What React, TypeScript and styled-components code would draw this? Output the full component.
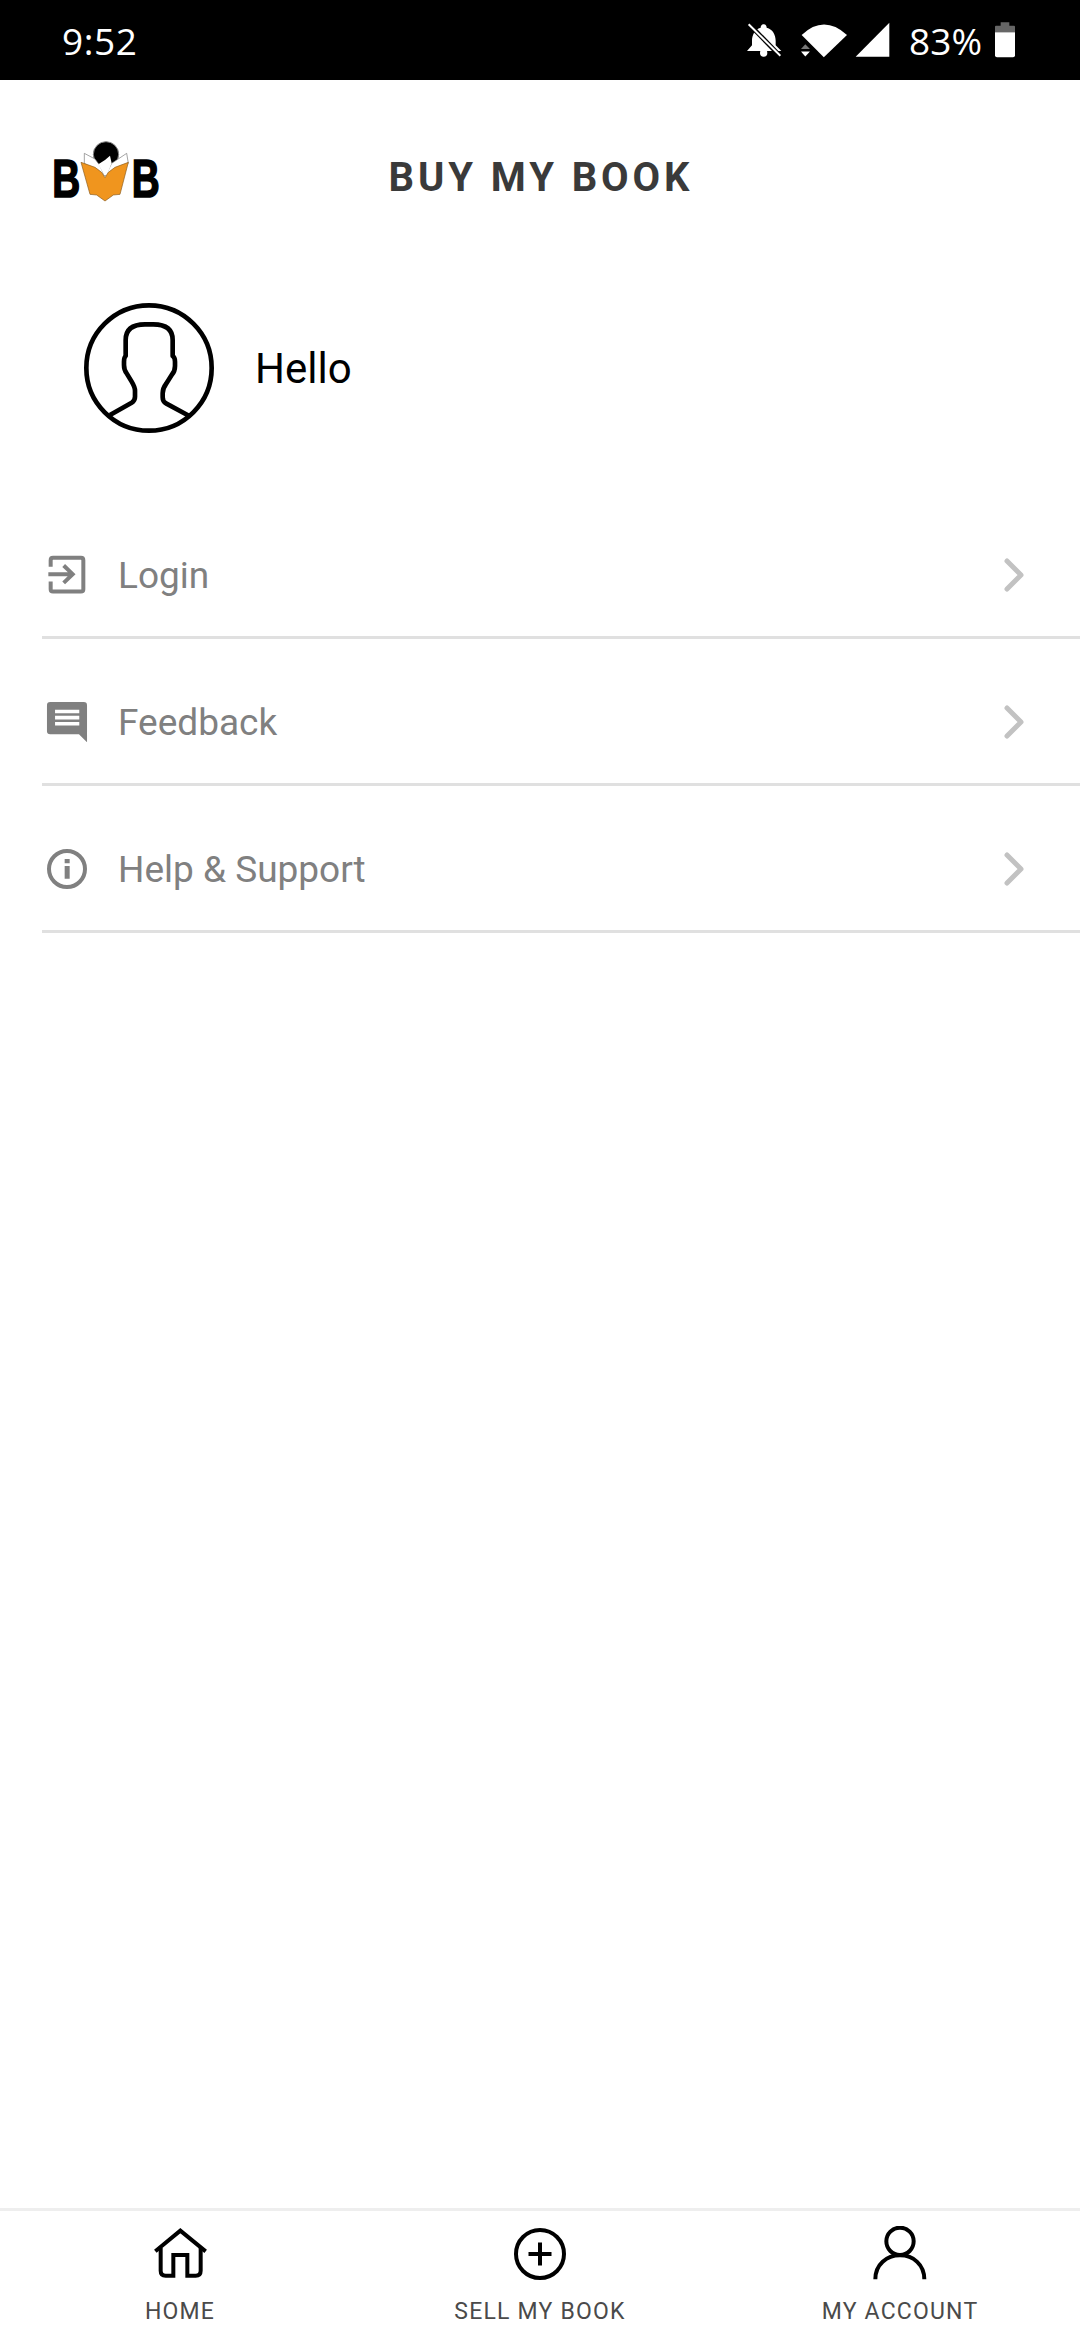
import React from "react";
import styled, { createGlobalStyle } from "styled-components";

const Global = createGlobalStyle`
  html, body { margin: 0; padding: 0; background: #fff; }
  #root { width: 1080px; height: 2340px; }
  * { box-sizing: border-box; }
`;

const Page = styled.div`
  width: 1080px;
  height: 2340px;
  display: flex;
  flex-direction: column;
  background: #fff;
  font-family: Roboto, "Liberation Sans", sans-serif;
  overflow: hidden;
`;

const StatusBar = styled.div`
  height: 80px;
  flex: none;
  background: #000;
  color: #fff;
  display: flex;
  align-items: center;
  padding: 0 65px 0 62px;
  font-family: "Open Sans", sans-serif;
  font-weight: 400;
  font-size: 37px;
`;
const Clock = styled.span`
  letter-spacing: 0.6px;
  margin-right: auto;
`;
const StatusIcon = styled.svg<{ $gap: number }>`
  display: block;
  flex: none;
  margin-left: ${(p) => p.$gap}px;
`;
const Battery = styled.span`
  margin-left: 19px;
  margin-right: 13px;
`;

const Header = styled.header`
  height: 194px;
  flex: none;
  display: grid;
  grid-template-columns: 1fr auto 1fr;
  align-items: center;
  padding: 0 43px 0 45px;
`;
const Title = styled.h1`
  margin: 0;
  font-size: 40px;
  font-weight: 700;
  letter-spacing: 3.9px;
  color: #3a3a3a;
`;
const Logo = styled.svg`
  display: block;
  margin-bottom: 9px;
`;

const Profile = styled.section`
  display: flex;
  align-items: center;
  gap: 41px;
  padding: 29px 0 0 84px;
  flex: none;
`;
const Avatar = styled.svg`
  display: block;
  flex: none;
`;
const Greeting = styled.span`
  font-size: 42px;
  color: #000;
`;

const Menu = styled.nav`
  flex: 1;
  margin-top: 59px;
  display: flex;
  flex-direction: column;
`;
const Row = styled.div`
  height: 126px;
  margin: 21px 0 0 42px;
  padding-right: 50px;
  border-bottom: 3px solid #e0e0e0;
  display: flex;
  align-items: center;
`;
const RowIcon = styled.span`
  width: 50px;
  height: 50px;
  flex: none;
  display: flex;
  align-items: center;
  justify-content: center;
  margin-right: 26px;
`;
const RowLabel = styled.span`
  flex: 1;
  padding-top: 2px;
  font-size: 37px;
  color: #808080;
`;
const Chevron = styled.svg`
  display: block;
  flex: none;
`;

const TabBar = styled.footer`
  height: 132px;
  flex: none;
  border-top: 3px solid #eeeeee;
  display: grid;
  grid-template-columns: repeat(3, 1fr);
`;
const Tab = styled.div`
  display: flex;
  flex-direction: column;
  align-items: center;
  padding-top: 15px;
`;
const TabIcon = styled.svg`
  display: block;
  flex: none;
`;
const TabLabel = styled.span`
  margin-top: 16px;
  font-size: 23px;
  line-height: 28px;
  letter-spacing: 1.2px;
  color: #4a4a4a;
`;

const chevron = (
  <Chevron width="30" height="44" viewBox="0 0 30 44" fill="none">
    <path d="M7 8 L21 22 L7 36" stroke="#c2c2c2" strokeWidth="5" strokeLinecap="round" strokeLinejoin="round" />
  </Chevron>
);

const items = [
  {
    label: "Login",
    icon: (
      <svg width="40" height="41" viewBox="80 70 120 122" fill="none" stroke="#808080" strokeWidth="12">
        <path d="M91 108 V88 Q91 81 98 81 H182 Q189 81 189 88 V175 Q189 182 182 182 H98 Q91 182 91 175 V152" />
        <path d="M84 130 H155 M130 104 L157 130 L130 156" />
      </svg>
    ),
  },
  {
    label: "Feedback",
    icon: (
      <svg width="42" height="42" viewBox="75 507 130 130">
        <path fill="#808080" d="M88 510 H192 Q202 510 202 520 V635 L177 610 H88 Q78 610 78 600 V520 Q78 510 88 510 Z" />
        <path fill="#fff" d="M103 534 H178 V545 H103 Z M103 553 H178 V564 H103 Z M103 572 H178 V583 H103 Z" />
      </svg>
    ),
  },
  {
    label: "Help & Support",
    icon: (
      <svg width="42" height="42" viewBox="77 953 126 126">
        <circle cx="140" cy="1016" r="54" fill="none" stroke="#808080" strokeWidth="12" />
        <path fill="#808080" d="M133 986 H148 V999 H133 Z M133 1007 H148 V1045 H133 Z" />
      </svg>
    ),
  },
];

export default function App() {
  return (
    <Page>
      <Global />
      <StatusBar>
        <Clock>9:52</Clock>
        <StatusIcon $gap={0} width="35" height="34" viewBox="140 68 105 102">
          <path fill="#fff" d="M190 72 C197 72 199 78 199 82 C218 87 226 104 226 122 L226 135 L243 152 L140 152 L155 135 L155 122 C155 104 163 87 181 82 C181 78 183 72 190 72 Z" />
          <circle cx="190" cy="158" r="11" fill="#fff" />
          <path d="M143 68 L240 168" stroke="#000" strokeWidth="14" />
          <path d="M145 72 L240 166" stroke="#fff" strokeWidth="6" />
        </StatusIcon>
        <StatusIcon $gap={18} width="48" height="36" viewBox="300 66 145 108">
          <path fill="#fff" d="M305 105 Q372 42 442 105 L372 172 Z" />
          <path fill="#777" d="M303 147 L316 133 L330 147 Z" />
          <path fill="#fff" d="M303 155 H330 L316 170 Z" />
        </StatusIcon>
        <StatusIcon $gap={7} width="35" height="36" viewBox="465 66 105 108">
          <path fill="#fff" d="M467 170 L568 68 V170 Z" />
        </StatusIcon>
        <Battery>83%</Battery>
        <StatusIcon $gap={0} width="20" height="36" viewBox="885 65 60 108">
          <path fill="#666" d="M902 66 H928 V76 H942 Q945 76 945 79 V96 H885 V79 Q885 76 888 76 H902 Z" />
          <path fill="#fff" d="M885 96 H945 V165 Q945 171 939 171 H891 Q885 171 885 165 Z" />
        </StatusIcon>
      </StatusBar>

      <Header>
        <Logo width="125" height="75" viewBox="0 0 375 225">
          <text x="22" y="187" fontFamily="Liberation Sans, sans-serif" fontWeight="700" fontSize="162" fill="#000" stroke="#000" strokeWidth="5" textLength="84" lengthAdjust="spacingAndGlyphs">B</text>
          <text x="260" y="187" fontFamily="Liberation Sans, sans-serif" fontWeight="700" fontSize="162" fill="#000" stroke="#000" strokeWidth="5" textLength="84" lengthAdjust="spacingAndGlyphs">B</text>
          <circle cx="183" cy="58" r="38" fill="#000" stroke="#888" strokeWidth="3" />
          <path fill="#fff" stroke="#777" strokeWidth="2" d="M118 55 L150 72 L165 92 L178 122 L182 122 L200 85 L245 55 L250 85 L215 110 L180 135 L140 100 L118 85 Z" />
          <path fill="#fff" d="M160 88 L180 75 L195 62 L200 85 L185 120 L178 120 Z" />
          <path fill="#f0951e" stroke="#8a5a1c" strokeWidth="2" d="M108 82 L150 97 L170 112 L180 128 L190 112 L210 97 L250 82 L225 178 L205 180 L180 198 L155 180 L135 178 Z" />
        </Logo>
        <Title>BUY MY BOOK</Title>
      </Header>

      <Profile>
        <Avatar width="130" height="130" viewBox="72 69 390 390" fill="none" stroke="#000" strokeWidth="14">
          <circle cx="267" cy="264" r="188" />
          <path strokeLinejoin="round" d="M150 405 L215 368 Q225 362 225 350 L225 332 Q225 322 215 305 L200 280 Q192 270 192 255 L192 245 Q192 232 197 228 L197 180 Q197 133 255 133 L280 133 Q338 133 338 180 L338 228 Q345 232 345 245 L345 258 Q345 275 335 285 L318 312 Q308 325 308 340 L308 352 Q308 365 318 370 L388 408" />
        </Avatar>
        <Greeting>Hello</Greeting>
      </Profile>

      <Menu>
        {items.map((it) => (
          <Row key={it.label}>
            <RowIcon>{it.icon}</RowIcon>
            <RowLabel>{it.label}</RowLabel>
            {chevron}
          </Row>
        ))}
      </Menu>

      <TabBar>
        <Tab>
          <TabIcon width="56" height="56" viewBox="66 76 168 168" fill="none" stroke="#000" strokeWidth="12">
            <path d="M76 152 L151 90 L227 152" strokeLinejoin="miter" />
            <path d="M92 142 V210 Q92 225 107 225 H130 V163 H172 V225 H197 Q212 225 212 210 V142" />
          </TabIcon>
          <TabLabel>HOME</TabLabel>
        </Tab>
        <Tab>
          <TabIcon width="56" height="56" viewBox="0 0 56 56" fill="none" stroke="#000">
            <circle cx="28" cy="28" r="24" strokeWidth="4" />
            <path d="M16.5 28 H39.5 M28 16.5 V39.5" strokeWidth="4" />
          </TabIcon>
          <TabLabel>SELL MY BOOK</TabLabel>
        </Tab>
        <Tab>
          <TabIcon width="56" height="56" viewBox="191 74 168 168" fill="none" stroke="#000" strokeWidth="12">
            <circle cx="275" cy="120" r="41" />
            <path d="M201 234 C201 190 235 162 275 162 C315 162 348 190 348 234" />
          </TabIcon>
          <TabLabel>MY ACCOUNT</TabLabel>
        </Tab>
      </TabBar>
    </Page>
  );
}
